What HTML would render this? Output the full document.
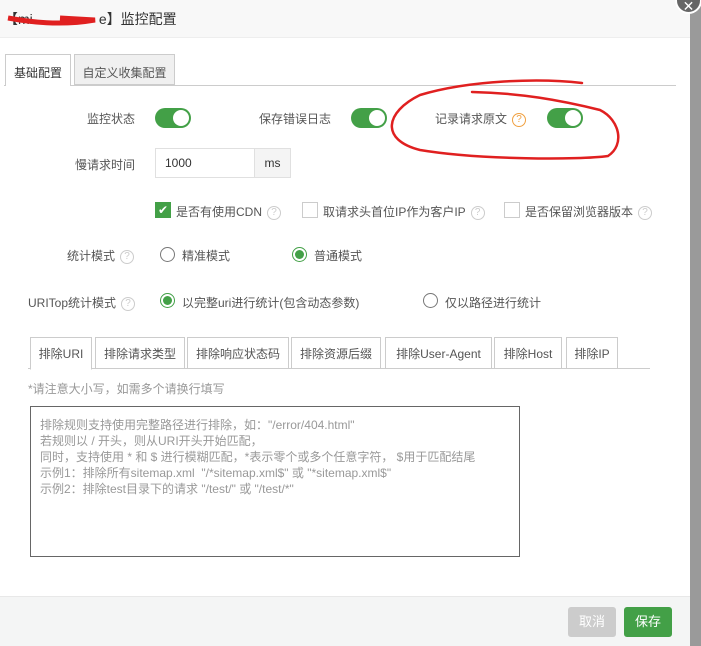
<!DOCTYPE html>
<html><head><meta charset="utf-8"><style>
*{margin:0;padding:0;box-sizing:border-box}
body{width:701px;height:646px;overflow:hidden;background:#9a9a9a;font-family:"Liberation Sans","Noto Sans CJK SC",sans-serif;font-size:12px;color:#555;position:relative}
.a{position:absolute;white-space:nowrap}
.dlg{position:absolute;left:0;top:0;width:690px;height:646px;background:#fff}
.hdr{position:absolute;left:0;top:0;width:690px;height:38px;background:#f8f8f8;border-bottom:1px solid #eee}
.ftr{position:absolute;left:0;top:596px;width:690px;height:50px;background:#f4f5f5;border-top:1px solid #e8e8e8}
.sw{position:absolute;width:36px;height:20px;border-radius:10px;background:#43a047}
.sw:after{content:"";position:absolute;right:2px;top:2px;width:16px;height:16px;border-radius:50%;background:#fff}
.q{display:inline-block;width:14px;height:14px;border:1px solid #ccc;border-radius:50%;color:#ccc;font-size:10px;line-height:12px;text-align:center;vertical-align:middle;margin-left:5px}
.cb{position:absolute;width:16px;height:16px;border:1px solid #ccc;background:#fff}
.rd{position:absolute;width:15px;height:15px;border:1px solid #777;border-radius:50%;background:#fff}
.rd.on{border-color:#43a047}
.rd.on:after{content:"";position:absolute;left:2px;top:2px;width:9px;height:9px;border-radius:50%;background:#43a047}
.tab{position:absolute;top:337px;height:32px;border:1px solid #ccc;background:#fff;font-size:12px;color:#555;line-height:32px;text-align:center;white-space:nowrap;overflow:hidden}
</style></head><body>
<div class="dlg">
<div class="hdr"></div>
<div class="a" style="left:4px;top:9px;font-size:14px;color:#333">【mi&nbsp;&nbsp;&nbsp;&nbsp;&nbsp;&nbsp;&nbsp;&nbsp;&nbsp;&nbsp;&nbsp;&nbsp;&nbsp;&nbsp;&nbsp;&nbsp;&nbsp;e】监控配置</div>
<div class="a" style="left:4px;top:85px;width:672px;border-top:1px solid #ccc"></div>
<div class="a" style="left:5px;top:54px;width:66px;height:32px;border:1px solid #ccc;border-bottom:none;background:#fff;line-height:36px;text-align:center;color:#333">基础配置</div>
<div class="a" style="left:74px;top:54px;width:101px;height:31px;border:1px solid #ccc;background:#f0f0f0;line-height:36px;text-align:center;color:#555">自定义收集配置</div>
<div class="a" style="left:87px;top:110px">监控状态</div>
<div class="sw" style="left:155px;top:108px"></div>
<div class="a" style="left:259px;top:110px">保存错误日志</div>
<div class="sw" style="left:351px;top:108px"></div>
<div class="a" style="left:435px;top:110px">记录请求原文<span class="q" style="border-color:#f0a040;color:#f0a040">?</span></div>
<div class="sw" style="left:547px;top:108px"></div>
<div class="a" style="left:75px;top:156px">慢请求时间</div>
<div class="a" style="left:155px;top:148px;width:100px;height:30px;border:1px solid #e0e0e0;padding-left:9px;line-height:28px;color:#333">1000</div>
<div class="a" style="left:254px;top:148px;width:37px;height:30px;border:1px solid #e0e0e0;background:#f4f4f4;line-height:28px;text-align:center;color:#333">ms</div>
<div class="cb" style="left:155px;top:202px;background:#43a047;border-color:#43a047;color:#fff;font-size:12px;line-height:14px;text-align:center">✔</div>
<div class="a" style="left:176px;top:203px">是否有使用CDN<span class="q">?</span></div>
<div class="cb" style="left:302px;top:202px"></div>
<div class="a" style="left:323px;top:203px">取请求头首位IP作为客户IP<span class="q">?</span></div>
<div class="cb" style="left:504px;top:202px"></div>
<div class="a" style="left:525px;top:203px">是否保留浏览器版本<span class="q">?</span></div>
<div class="a" style="left:67px;top:247px">统计模式<span class="q">?</span></div>
<div class="rd" style="left:160px;top:247px"></div>
<div class="a" style="left:182px;top:247px">精准模式</div>
<div class="rd on" style="left:292px;top:247px"></div>
<div class="a" style="left:314px;top:247px">普通模式</div>
<div class="a" style="left:28px;top:294px">URITop统计模式<span class="q">?</span></div>
<div class="rd on" style="left:160px;top:293px"></div>
<div class="a" style="left:182px;top:294px">以完整uri进行统计(包含动态参数)</div>
<div class="rd" style="left:423px;top:293px"></div>
<div class="a" style="left:445px;top:294px">仅以路径进行统计</div>
<div class="a" style="left:28px;top:368px;width:622px;border-top:1px solid #ccc"></div>
<div class="tab" style="left:30px;width:62px;border-bottom-color:#fff;height:33px">排除URI</div>
<div class="tab" style="left:95px;width:90px">排除请求类型</div>
<div class="tab" style="left:187px;width:102px">排除响应状态码</div>
<div class="tab" style="left:291px;width:90px">排除资源后缀</div>
<div class="tab" style="left:385px;width:107px">排除User-Agent</div>
<div class="tab" style="left:494px;width:68px">排除Host</div>
<div class="tab" style="left:566px;width:52px">排除IP</div>
<div class="a" style="left:28px;top:380px;color:#999">*请注意大小写，如需多个请换行填写</div>
<div class="a" style="left:30px;top:406px;width:490px;height:151px;border:1px solid #666;padding:10px 0 0 9px;color:#999;line-height:16px;overflow:hidden">排除规则支持使用完整路径进行排除，如："/error/404.html"<br>若规则以 / 开头，则从URI开头开始匹配，<br>同时，支持使用 * 和 $ 进行模糊匹配，*表示零个或多个任意字符， $用于匹配结尾<br>示例1：排除所有sitemap.xml &nbsp;"/*sitemap.xml$" 或 "*sitemap.xml$"<br>示例2：排除test目录下的请求 "/test/" 或 "/test/*"</div>
<div class="ftr"></div>
<div class="a" style="left:568px;top:607px;width:48px;height:30px;border-radius:3px;background:#ccc;color:#fff;line-height:30px;text-align:center;font-size:13px">取消</div>
<div class="a" style="left:624px;top:607px;width:48px;height:30px;border-radius:3px;background:#43a047;color:#fff;line-height:30px;text-align:center;font-size:13px">保存</div>
</div>
<div class="a" style="left:675px;top:-13px;width:27px;height:27px;border-radius:50%;background:#666;border:2px solid #fff;color:#fff;text-align:center;line-height:34px;font-size:14px">✕</div>
<svg class="a" style="left:0;top:0" width="701" height="646">
<path d="M8 18 C30 22,60 26,95 20 L60 18" stroke="#e02020" stroke-width="5" fill="none"/>
<path d="M582 83 C540 78,470 80,420 95 C385 112,380 140,420 150 C480 160,580 160,608 156 C625 145,620 120,600 110 C560 100,520 93,472 92" stroke="#e02020" stroke-width="2.5" fill="none" stroke-linecap="round"/>
</svg>
</body></html>
